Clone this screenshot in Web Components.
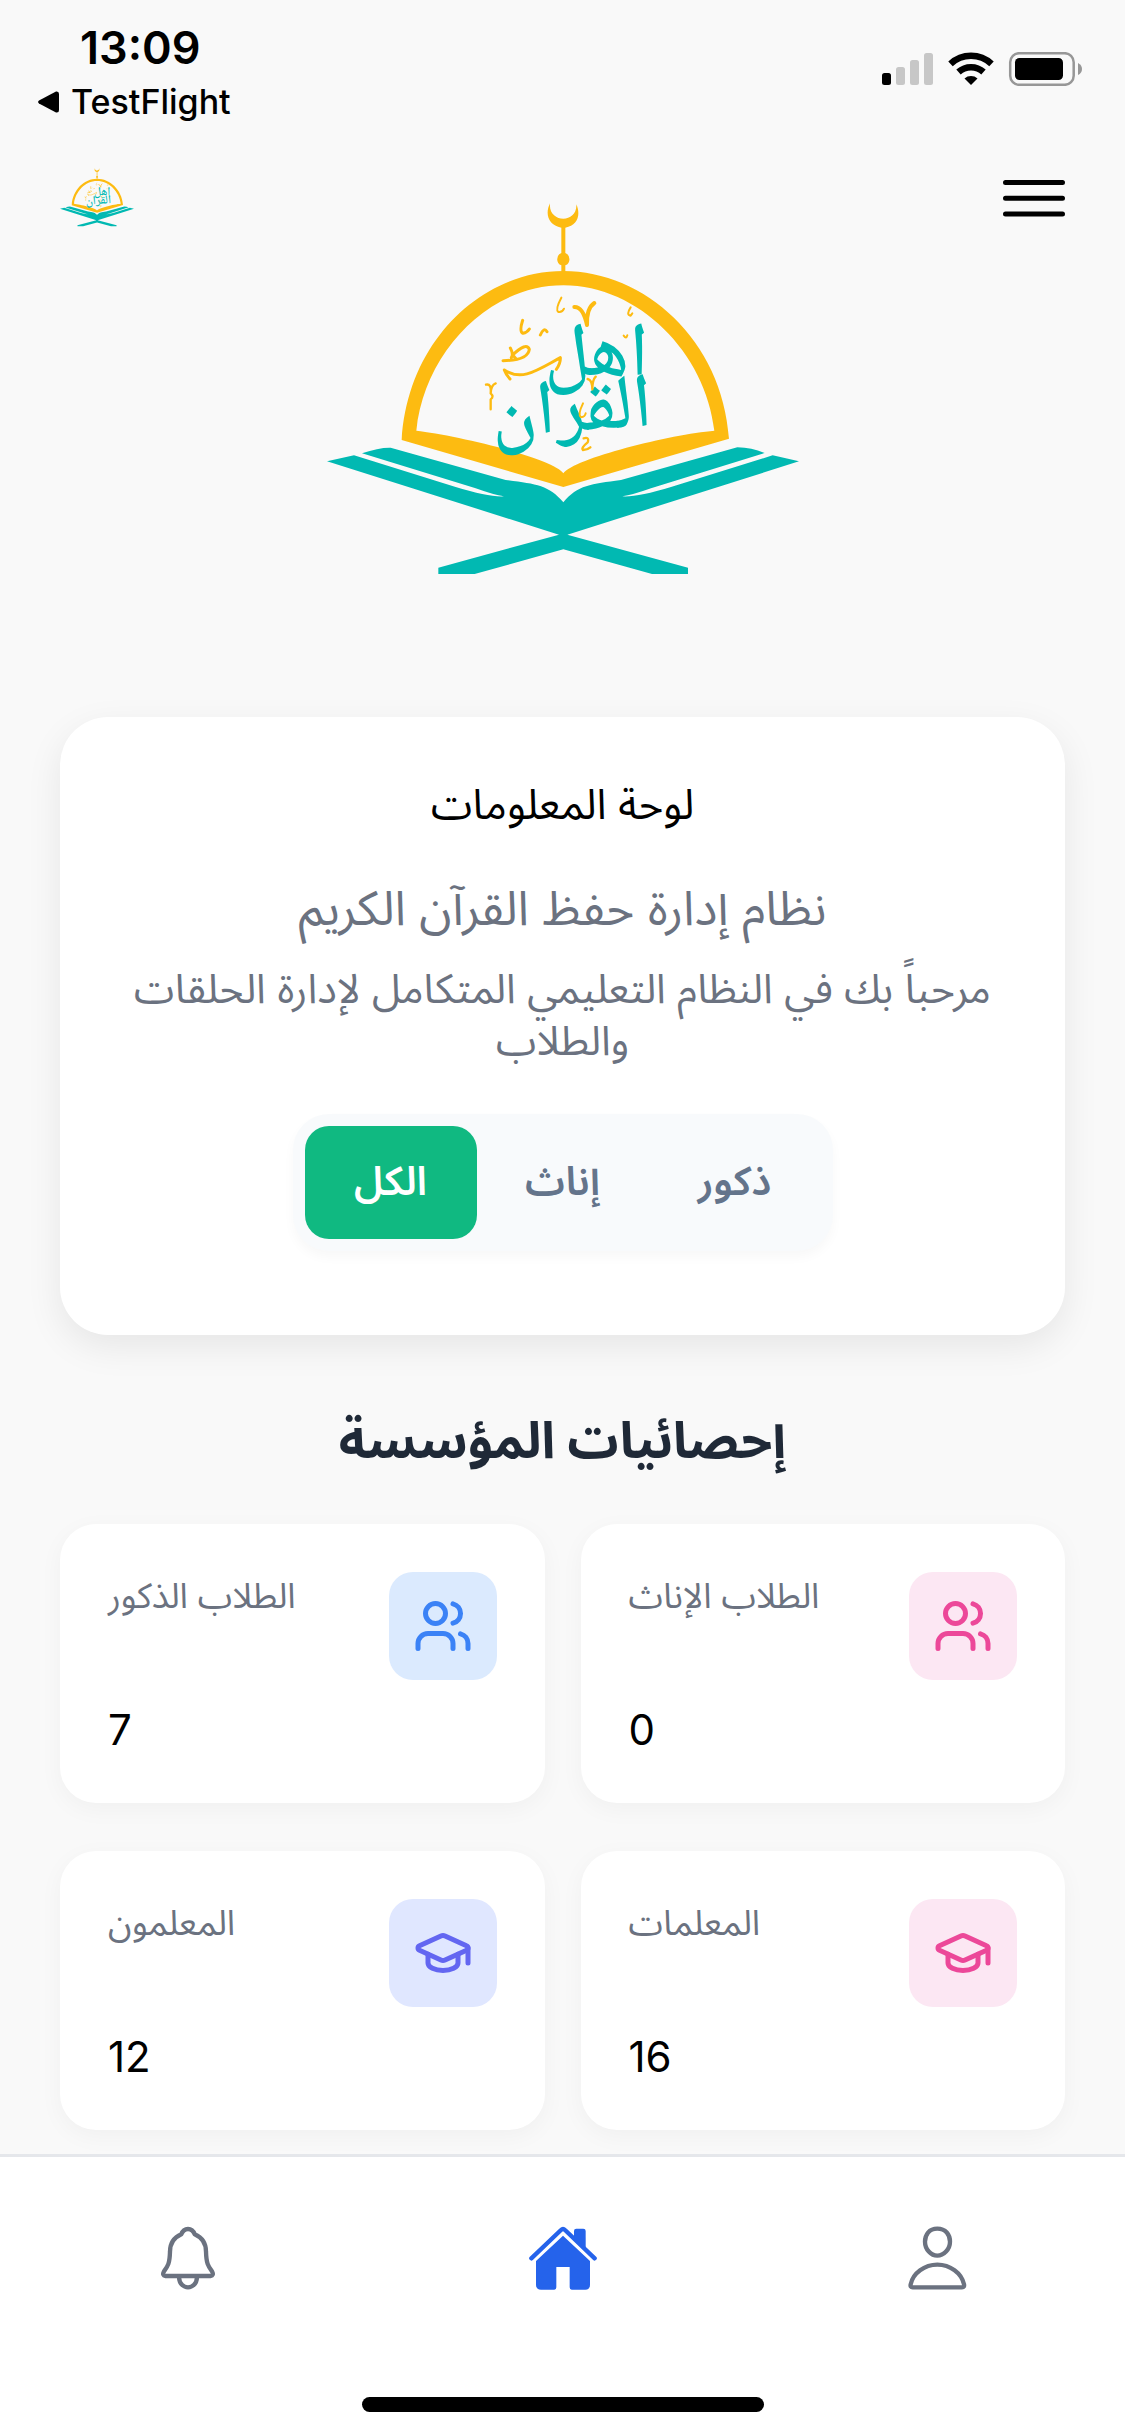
<!DOCTYPE html>
<html lang="ar">
<head>
<meta charset="utf-8">
<meta name="viewport" content="width=device-width, initial-scale=1">
<title>أهل القرآن</title>
<style>
  body { margin: 0; background: #f9f9f9; font-family: Inter, "Noto Sans Arabic", "Noto Sans", "DejaVu Sans", sans-serif; color: #000; }
</style>
</head>
<body>
<quran-app></quran-app>

<script>
const define = (name, html, setup) => {
  const tpl = document.createElement('template');
  tpl.innerHTML = html;
  customElements.define(name, class extends HTMLElement {
    connectedCallback() {
      if (this.shadowRoot) return;
      this.attachShadow({ mode: 'open' }).append(tpl.content.cloneNode(true));
      if (setup) setup(this, this.shadowRoot);
    }
  });
};

define('status-bar', `
<style>
  :host { display: flex; justify-content: space-between; box-sizing: border-box; height: 132px; padding: 20px 42px 0 38px; }
  .left { display: flex; flex-direction: column; align-items: flex-start; }
  time { font-size: 45px; line-height: 56px; font-weight: 600; padding-left: 42px; }
  a { display: flex; align-items: center; gap: 12px; color: inherit; text-decoration: none; font-size: 34px; line-height: 52px; font-weight: 500; }
  .right { padding-top: 32px; }
  svg { display: block; }
</style>
<div class="left">
  <time>13:09</time>
  <a href="#back"><svg width="21" height="22" viewBox="0 0 21 22" aria-hidden="true"><path d="M1 9.5 18 .6Q21 0 21 3V19Q21 22 18 21.400L1 12.500Q-.8 11 1 9.500Z"/></svg><span>TestFlight</span></a>
</div>
<div class="right">
  <svg width="201" height="34" viewBox="0 0 201 34" aria-hidden="true">
    <rect y="21" width="9" height="12" rx="2.500"/>
    <g fill="#c7c7c7"><rect x="14" y="15" width="9" height="18" rx="2.500"/><rect x="28" y="8" width="9" height="25" rx="2.500"/><rect x="42" y="1" width="9" height="32" rx="2.500"/></g>
    <g fill="none" stroke="#000" stroke-width="6.500"><path d="M68.500 11.800A30 30 0 0 1 109.500 11.800"/><path d="M76.500 20A18.500 18.500 0 0 1 101.500 20"/></g>
    <path d="M82.500 26.500A10 10 0 0 1 95.500 26.500L89 33Z"/>
    <rect x="128.200" y="1.200" width="63.500" height="31.600" rx="9" fill="none" stroke="#979797" stroke-width="2.500"/>
    <rect x="133" y="6" width="48" height="22" rx="4.500"/>
    <path d="M196 11q4 2 4 6t-4 6Z" fill="#979797"/>
  </svg>
</div>`);

define('brand-logo', `
<style>
  :host { display: block; }
  svg { display: block; width: 100%; }
  text { font-family: "Noto Naskh Arabic", "Noto Sans Arabic", "DejaVu Sans", sans-serif; font-weight: 500; }
</style>
<svg viewBox="54 66 1416 1120" role="img" aria-label="اهل القران">
  <g fill="#fdbb11">
    <path d="M723 70C717 130 806 132 802 73C816 105 806 135 769 143V219A20 20 0 0 1 769 256V275H757V256A20 20 0 0 1 757 219V143C718 135 707 103 723 70Z"/>
    <path fill-rule="evenodd" d="M278 780C296 480 520 273 763 273S1240 480 1260 776L763 921ZM322 752C440 765 735 835 763 880C795 835 1085 763 1216 752C1190 520 990 316 763 316S345 520 322 752Z"/>
  </g>
  <g fill="#01b9b2">
    <path d="M54 844 135 826 440 921Q540 952 585 949Q555 945 500 925L159 820Q210 802 245 803L590 900C680 912 720 915 763 967C806 915 846 912 936 900L1285 802Q1330 803 1367 819L1026 925Q970 945 940 949Q986 952 1086 921L1391 826 1470 844L775 1064 1137 1163V1182H1029L763 1108 497 1182H388V1163L750 1064Z"/>
    <text x="706" y="584" font-size="229" direction="ltr">اهل</text>
    <text x="550" y="770" font-size="230" direction="ltr" transform="rotate(-4 550 770)">القران</text>
  </g>
  <g fill="none" stroke="#fdbb11" stroke-width="9" stroke-linecap="round" stroke-linejoin="round">
    <path stroke-width="6" d="M757 353Q738 388 748 396Q760 398 765 386M965 382Q950 405 965 407L970 400M944 467Q952 478 955 466M822 670Q805 705 816 712Q828 710 830 700"/>
    <path stroke-width="12" d="M796 381Q822 380 834 435Q832 385 856 369"/>
    <path d="M641 421Q630 455 642 460Q654 458 661 447M694 465Q705 440 714 455M582 542Q657 541 661 508Q652 485 610 526Q616 530 620 535M604 504Q614 522 607 533M586 570C640 605 685 570 754 533Q755 550 742 568M586 570Q590 582 603 597"/>
    <path stroke-width="7" d="M531 614Q548 610 545 640Q546 615 560 610M545 640Q556 650 545 658V688M836 597Q850 600 850 628Q850 600 860 590M824 775Q842 770 836 787Q815 804 822 810Q835 810 844 802"/>
  </g>
</svg>`);

define('app-header', `
<style>
  :host { display: grid; grid-template-columns: 1fr auto 1fr; align-items: start; padding: 36px 60px 0; }
  .mark { width: 74px; }
  .hero { width: 472px; padding-top: 34px; }
  button { justify-self: end; margin: 0; padding: 11px 0; border: 0; background: none; color: inherit; }
  svg { display: block; }
</style>
<brand-logo class="mark"></brand-logo>
<brand-logo class="hero"></brand-logo>
<button type="button" aria-label="القائمة"><svg width="62" height="38" viewBox="0 0 62 38" stroke="#000" stroke-width="5" stroke-linecap="round"><path d="M2.500 3.500H59.500M2.500 19.200H59.500M2.500 35H59.500"/></svg></button>`);

define('gender-filter', `
<style>
  :host { display: flex; padding: 12px; border-radius: 36px; background: #f8fafc; box-shadow: 0 6px 12px rgba(0,0,0,.03); }
  button { min-width: 172px; height: 113px; margin: 0; padding: 0 24px; border: 0; border-radius: 24px; background: none; color: #64748b; font: inherit; font-size: 40px; font-weight: 600; }
  button[aria-pressed="true"] { background: #10b981; color: #fff; }
</style>
<button type="button" aria-pressed="true">الكل</button>
<button type="button" aria-pressed="false">إناث</button>
<button type="button" aria-pressed="false">ذكور</button>`, (host, root) => {
  const buttons = root.querySelectorAll('button');
  buttons.forEach(b => b.addEventListener('click', () => buttons.forEach(o => o.setAttribute('aria-pressed', o === b))));
});

define('welcome-card', `
<style>
  :host { display: flex; flex-direction: column; align-items: center; box-sizing: border-box; padding: 54px 60px 84px; border-radius: 48px; background: #fff; box-shadow: 0 12px 36px rgba(0,0,0,.08); text-align: center; }
  h1, h2, p { margin: 0; font-weight: 400; }
  h1 { font-size: 42px; line-height: 66px; }
  h2 { margin-top: 35px; font-size: 48px; line-height: 72px; color: #6b7280; }
  p { margin-top: 18px; font-size: 41px; line-height: 52px; color: #6b7280; }
  gender-filter { margin-top: 48px; }
</style>
<h1 dir="rtl">لوحة المعلومات</h1>
<h2 dir="rtl">نظام إدارة حفظ القرآن الكريم</h2>
<p dir="rtl">مرحباً بك في النظام التعليمي المتكامل لإدارة الحلقات والطلاب</p>
<gender-filter></gender-filter>`);

const glyphs = {
  users: '<path d="M16 21v-2a4 4 0 0 0-4-4H6a4 4 0 0 0-4 4v2"/><circle cx="9" cy="7" r="4"/><path d="M22 21v-2a4 4 0 0 0-3-3.870M16 3.130a4 4 0 0 1 0 7.750"/>',
  cap: '<path d="M21.420 10.922a1 1 0 0 0-.019-1.838L12.830 5.180a2 2 0 0 0-1.660 0L2.600 9.080a1 1 0 0 0 0 1.832l8.570 3.908a2 2 0 0 0 1.660 0z"/><path d="M22 10v6M6 12.500V16a6 3 0 0 0 12 0v-3.500"/>'
};

define('stat-card', `
<style>
  :host { display: flex; flex-direction: column; gap: 24px; padding: 48px; border-radius: 36px; background: #fff; box-shadow: 0 6px 24px rgba(0,0,0,.04); }
  .top { display: flex; justify-content: space-between; align-items: flex-start; }
  .label { font-size: 35px; line-height: 47px; color: #6b7280; }
  .tile { display: grid; place-items: center; width: 108px; height: 108px; border-radius: 24px; background: var(--tile); }
  svg { display: block; width: 60px; height: 60px; fill: none; stroke: var(--ink); stroke-width: 2; stroke-linecap: round; stroke-linejoin: round; }
  .value { font-size: 42px; line-height: 51px; }
</style>
<div class="top"><span class="label"><slot name="label"></slot></span><span class="tile"><svg viewBox="0 0 24 24" aria-hidden="true"></svg></span></div>
<div class="value"><slot></slot></div>`, (host, root) => {
  root.querySelector('svg').innerHTML = glyphs[host.getAttribute('icon')];
});

define('stats-section', `
<style>
  :host { display: block; }
  h2 { margin: 0 0 48px; font-size: 51px; line-height: 72px; font-weight: 700; color: #1f2937; text-align: center; }
  .grid { display: grid; grid-template-columns: 1fr 1fr; gap: 48px 36px; }
  .blue { --tile: #dbeafe; --ink: #3b82f6; }
  .pink { --tile: #fce7f3; --ink: #ec4899; }
  .indigo { --tile: #e0e7ff; --ink: #6366f1; }
</style>
<h2 dir="rtl">إحصائيات المؤسسة</h2>
<div class="grid">
  <stat-card class="blue" icon="users"><span slot="label">الطلاب الذكور</span>7</stat-card>
  <stat-card class="pink" icon="users"><span slot="label">الطلاب الإناث</span>0</stat-card>
  <stat-card class="indigo" icon="cap"><span slot="label">المعلمون</span>12</stat-card>
  <stat-card class="pink" icon="cap"><span slot="label">المعلمات</span>16</stat-card>
</div>`);

define('tab-bar', `
<style>
  :host { display: block; background: #fff; border-top: 3px solid #e5e7eb; }
  nav { display: grid; grid-template-columns: repeat(3, 1fr); padding: 69px 0 105px; }
  a { display: grid; place-items: center; color: #6b7280; }
  a[aria-current] { color: #2563eb; }
  svg { display: block; height: 66px; }
  .line { fill: none; stroke: currentColor; stroke-width: 13; stroke-linejoin: round; }
  .home { width: 402px; height: 15px; margin: 0 auto 24px; border-radius: 8px; background: #000; }
</style>
<nav>
  <a href="#notifications" aria-label="الإشعارات"><svg viewBox="60 78 168 198"><path class="line" d="M77 228H211Q223 226 216 214C204 198 199 190 198 155C198 128 187 113 164 103C160 92 155 87 144 87S128 92 124 103C101 113 90 128 90 155C89 190 84 198 72 214Q65 226 77 228ZM117 232C119 272 169 272 171 232"/></svg></a>
  <a href="#home" aria-label="الرئيسية" aria-current="page"><svg viewBox="1164 78 204 198" fill="currentColor"><path d="M1171 175 1260 90Q1266 84 1272 90L1361 175" fill="none" stroke="currentColor" stroke-width="13" stroke-linecap="round"/><path d="M1299 112V93Q1299 86 1306 86H1327Q1334 86 1334 93V146Z"/><path d="M1266 107 1347 183V254Q1347 269 1333 269H1292Q1286 269 1286 262V201H1246V262Q1246 269 1240 269H1200Q1185 269 1185 254V183Z"/></svg></a>
  <a href="#profile" aria-label="الملف الشخصي"><svg viewBox="1220 78 182 198"><path class="line" d="M1311 86C1286 86 1274 104 1274 125C1274 148 1292 167 1311 167S1349 148 1349 125C1349 104 1336 86 1311 86ZM1237 262H1385Q1393 262 1391 253C1384 219 1349 194 1311 194S1238 219 1231 253Q1229 262 1237 262Z"/></svg></a>
</nav>
<div class="home"></div>`);

define('quran-app', `
<style>
  :host { display: flex; flex-direction: column; min-height: 100vh; }
  main { flex: 1; display: flex; flex-direction: column; gap: 69px; padding: 142px 60px 24px; }
</style>
<status-bar></status-bar>
<app-header></app-header>
<main>
  <welcome-card></welcome-card>
  <stats-section></stats-section>
</main>
<tab-bar></tab-bar>`);
</script>
</body>
</html>
